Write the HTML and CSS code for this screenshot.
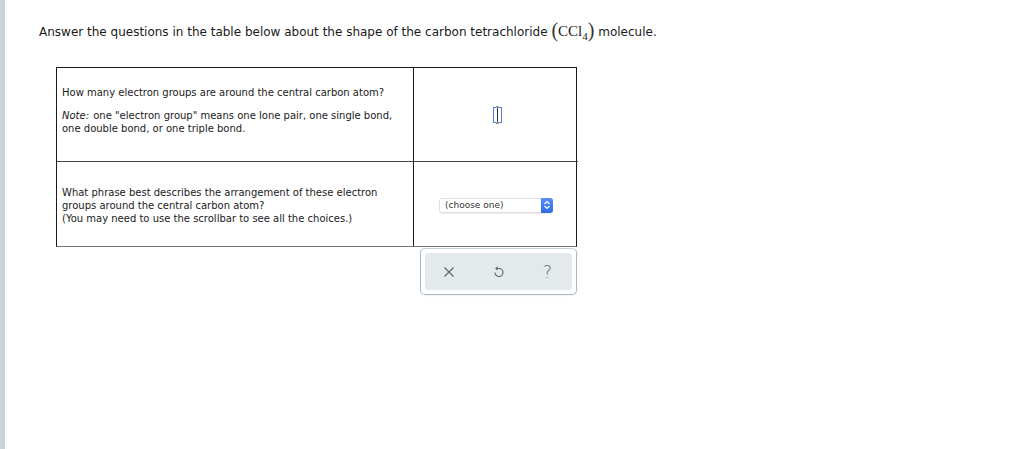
FILE: index.html
```html
<!DOCTYPE html>
<html>
<head>
<meta charset="utf-8">
<link rel="stylesheet" href="styles.css">
</head>
<body>
<div class="side"></div>
<main class="content">
  <p class="intro">Answer the questions in the table below about the shape of the carbon tetrachloride <span class="formula"><span class="paren">(</span>CCl<sub>4</sub><span class="paren">)</span></span> molecule.</p>
  <div class="wrap">
    <div class="qtable">
      <div class="cell q q1">
        <p>How many electron groups are around the central carbon atom?</p>
        <p><em>Note:</em> one "electron group" means one lone pair, one single bond, one double bond, or one triple bond.</p>
      </div>
      <div class="cell a a1">
        <span class="input"><span class="caret"></span></span>
      </div>
      <div class="cell q q2">
        <p>What phrase best describes the arrangement of these electron groups around the central carbon atom?<br>(You may need to use the scrollbar to see all the choices.)</p>
      </div>
      <div class="cell a a2">
        <div class="select"><span class="sel-text">(choose one)</span><span class="sel-btn"><svg width="8" height="10" viewBox="0 0 8 10"><path d="M1.5 4 L4 1.5 L6.5 4 M1.5 6 L4 8.5 L6.5 6" fill="none" stroke="#fff" stroke-width="1.2"/></svg></span></div>
      </div>
    </div>
    <div class="tools">
      <div class="tools-inner">
        <svg width="12" height="12" viewBox="0 0 12 12"><path d="M1.5 1.5 L10.5 10.5 M10.5 1.5 L1.5 10.5" stroke="#5b6b73" stroke-width="1.3" fill="none"/></svg>
        <svg width="12" height="13" viewBox="0 0 12 13"><path d="M3 3.5 H6 A4 4 0 1 1 2 7.5" stroke="#5b6b73" stroke-width="1.2" fill="none"/><path d="M4.6 1.9 L3 3.5 L4.6 5.1" stroke="#5b6b73" stroke-width="1.2" fill="none"/></svg>
        <span class="help">?</span>
      </div>
    </div>
  </div>
</main>
</body>
</html>
```
FILE: styles.css
```css
html, body {
  margin: 0;
  padding: 0;
  background: #fff;
  height: 100%;
}
body {
  font-family: "DejaVu Sans", Verdana, sans-serif;
  color: #1a1a1a;
}
.side {
  position: fixed;
  left: 0;
  top: 0;
  bottom: 0;
  width: 5px;
  background: #c8d3da;
}
.content {
  padding: 20px 0 0 39px;
}
.intro {
  margin: 0;
  font-size: 12px;
  line-height: 18px;
}
.formula {
  font-family: "Liberation Serif", "Times New Roman", serif;
  font-size: 15px;
}
.paren {
  font-size: 20px;
  color: #333;
  position: relative;
  top: 1px;
}
.formula sub {
  font-size: 11px;
  vertical-align: -4px;
  line-height: 0;
}
.wrap {
  margin: 26px 0 0 17px;
  width: 521px;
}
.qtable {
  display: grid;
  grid-template-columns: 357px 164px;
  grid-template-rows: 94px 84px;
  border: 1px solid #1a1a1a;
  border-bottom-color: #777;
  box-sizing: border-box;
}
.cell {
  font-size: 10px;
  line-height: 13px;
  color: #1a1a1a;
}
.q {
  border-right: 1px solid #1a1a1a;
  padding: 0 8px 0 5px;
  display: flex;
  flex-direction: column;
  justify-content: center;
}
.q1, .a1 {
  border-bottom: 1px solid #444;
}
.q p {
  margin: 0;
}
.q em {
  display: inline-block;
  padding-right: 1px;
}
.q1 p + p {
  margin-top: 10px;
}
.q1 {
  padding-bottom: 8px;
}
.q2 {
  padding-top: 2px;
}
.a {
  display: flex;
  align-items: center;
  justify-content: center;
}
.input {
  width: 7px;
  height: 14px;
  border: 1px solid #5b7cf0;
  position: relative;
  margin-left: 2px;
}
.caret {
  position: absolute;
  left: 3px;
  top: -2px;
  width: 1px;
  height: 18px;
  background: #333;
}
.caret::before, .caret::after {
  content: "";
  position: absolute;
  left: -1px;
  width: 3px;
  height: 2px;
  background: #999;
}
.caret::before { top: 0; }
.caret::after { bottom: 0; }
.select {
  display: flex;
  width: 114px;
  height: 15px;
  border: 1px solid #e0e0e0;
  border-radius: 3px;
  box-sizing: border-box;
  margin-top: 2px;
  box-shadow: 0 1px 1px rgba(0,0,0,0.08);
}
.sel-text {
  flex: 1;
  font-size: 9px;
  line-height: 13px;
  padding-left: 5px;
  color: #333;
}
.sel-btn {
  width: 12px;
  background: linear-gradient(#5a8df8, #2f6be8);
  border-radius: 0 3px 3px 0;
  display: flex;
  align-items: center;
  justify-content: center;
  margin: -1px -1px -1px 0;
}
.tools {
  margin: 1px 0 0 364px;
  width: 157px;
  height: 47px;
  border: 1px solid #a9b9c1;
  border-top-color: #c5d0d5;
  border-radius: 5px;
  box-sizing: border-box;
  padding: 4px;
  box-shadow: 0 1px 2px rgba(0,0,0,0.05);
}
.tools-inner {
  height: 37px;
  background: #e4e9ec;
  border-radius: 3px;
  display: flex;
  align-items: center;
  justify-content: space-between;
  padding: 0 20px 0 18px;
}
.help {
  font-family: "DejaVu Sans", sans-serif;
  font-size: 17px;
  color: #5b6b73;
  font-weight: 300;
}
```
